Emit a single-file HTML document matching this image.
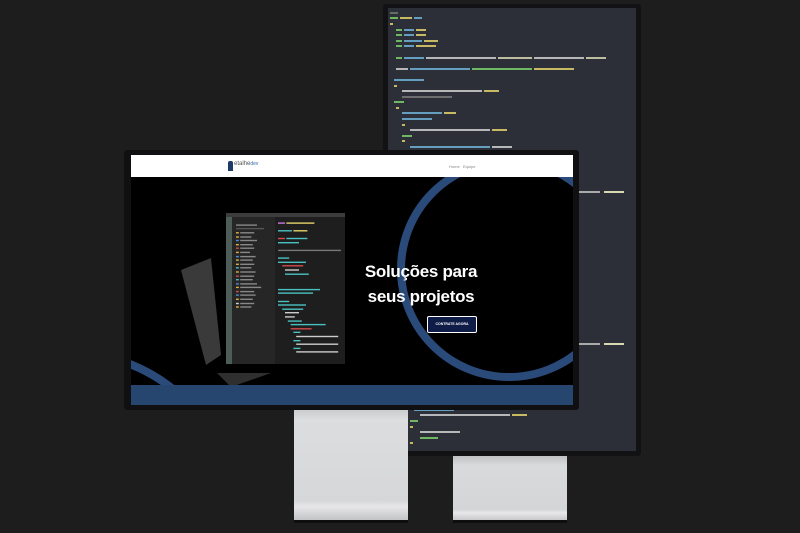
<!DOCTYPE html>
<html><head><meta charset="utf-8"><style>
*{margin:0;padding:0;box-sizing:border-box}
html,body{width:800px;height:533px;overflow:hidden}
body{background:#1d1d1e;position:relative;font-family:"Liberation Sans",sans-serif}
.a{position:absolute}
.code div{height:5.6px;display:flex;align-items:center;overflow:hidden}
.code span{display:block;flex:none;height:2px;margin-right:2px}
</style></head><body>
<!-- back stand -->
<div class="a" style="left:453px;top:455px;width:114px;height:68px;background:linear-gradient(#bdbec0,#d9dadc 15%,#d4d5d7 80%,#e8e8ea 85%,#b9babc);"></div>
<div class="a" style="left:453px;top:520px;width:114px;height:3px;background:#0e0e0e"></div>
<!-- back monitor -->
<div class="a" style="left:383px;top:4px;width:258px;height:452px;background:#121214;border-radius:3px"></div>
<div class="a" style="left:388px;top:8px;width:248px;height:443px;background:#2c2e38;overflow:hidden">
<div class="a code" style="left:2px;top:2px;width:244px;opacity:.85">
<div><span style="width:8px;background:#6d7b6e"></span></div>
<div><span style="width:8px;background:#7bd06a"></span><span style="width:12px;background:#e3d36a"></span><span style="width:8px;background:#6fb3d8"></span></div>
<div><span style="width:3px;background:#e3d36a"></span></div>
<div style="padding-left:6px"><span style="width:6px;background:#7bd06a"></span><span style="width:10px;background:#6fb3d8"></span><span style="width:10px;background:#e3d36a"></span></div>
<div style="padding-left:6px"><span style="width:6px;background:#7bd06a"></span><span style="width:10px;background:#6fb3d8"></span><span style="width:10px;background:#e3d36a"></span></div>
<div style="padding-left:6px"><span style="width:6px;background:#7bd06a"></span><span style="width:18px;background:#6fb3d8"></span><span style="width:14px;background:#e3d36a"></span></div>
<div style="padding-left:6px"><span style="width:6px;background:#7bd06a"></span><span style="width:10px;background:#6fb3d8"></span><span style="width:20px;background:#e3d36a"></span></div>
<div></div>
<div style="padding-left:6px"><span style="width:6px;background:#7bd06a"></span><span style="width:20px;background:#6fb3d8"></span><span style="width:70px;background:#cfcfcf"></span><span style="width:34px;background:#d8d8b0"></span><span style="width:50px;background:#cfcfcf"></span><span style="width:20px;background:#d8d8b0"></span></div>
<div></div>
<div style="padding-left:6px"><span style="width:12px;background:#cfcfcf"></span><span style="width:60px;background:#6fb3d8"></span><span style="width:60px;background:#7bd06a"></span><span style="width:40px;background:#e3d36a"></span></div>
<div></div>
<div style="padding-left:4px"><span style="width:30px;background:#6fb3d8"></span></div>
<div style="padding-left:4px"><span style="width:3px;background:#e3d36a"></span></div>
<div style="padding-left:12px"><span style="width:80px;background:#cfcfcf"></span><span style="width:15px;background:#e3d36a"></span></div>
<div style="padding-left:12px"><span style="width:50px;background:#7a7a7a"></span></div>
<div style="padding-left:4px"><span style="width:10px;background:#7bd06a"></span></div>
<div style="padding-left:6px"><span style="width:3px;background:#e3d36a"></span></div>
<div style="padding-left:12px"><span style="width:40px;background:#6fb3d8"></span><span style="width:12px;background:#e3d36a"></span></div>
<div style="padding-left:12px"><span style="width:30px;background:#6fb3d8"></span></div>
<div style="padding-left:12px"><span style="width:3px;background:#e3d36a"></span></div>
<div style="padding-left:20px"><span style="width:80px;background:#cfcfcf"></span><span style="width:15px;background:#e3d36a"></span></div>
<div style="padding-left:12px"><span style="width:10px;background:#7bd06a"></span></div>
<div style="padding-left:12px"><span style="width:3px;background:#e3d36a"></span></div>
<div style="padding-left:20px"><span style="width:80px;background:#6fb3d8"></span><span style="width:20px;background:#cfcfcf"></span></div>
<div style="padding-left:20px"><span style="width:30px;background:#6fb3d8"></span></div>
<div style="padding-left:20px"><span style="width:3px;background:#e3d36a"></span></div>
<div style="padding-left:28px"><span style="width:100px;background:#cfcfcf"></span><span style="width:15px;background:#e3d36a"></span></div>
<div style="padding-left:20px"><span style="width:10px;background:#7bd06a"></span></div>
<div style="padding-left:20px"><span style="width:3px;background:#e3d36a"></span></div>
<div style="padding-left:28px"><span style="width:40px;background:#cfcfcf"></span></div>
<div style="padding-left:28px"><span style="width:20px;background:#7bd06a"></span></div>
<div style="padding-left:20px"><span style="width:3px;background:#e3d36a"></span></div>
<div></div>
<div style="padding-left:12px"><span style="width:3px;background:#e3d36a"></span></div>
<div></div>
<div style="padding-left:4px"><span style="width:3px;background:#e3d36a"></span></div>
</div>
<div class="a" style="left:190px;top:183px;width:50px;height:2px;font-size:0"><span style="display:inline-block;width:22px;height:2px;background:#aaa"></span><span style="display:inline-block;width:4px"></span><span style="display:inline-block;width:20px;height:2px;background:#d8d8b0"></span></div>
<div class="a" style="left:190px;top:335px;width:50px;height:2px;font-size:0"><span style="display:inline-block;width:22px;height:2px;background:#aaa"></span><span style="display:inline-block;width:4px"></span><span style="display:inline-block;width:20px;height:2px;background:#d8d8b0"></span></div>
<div class="a code" style="left:22px;top:399px;width:220px;opacity:.85">
<div style="padding-left:4px"><span style="width:40px;background:#6fb3d8"></span></div>
<div style="padding-left:10px"><span style="width:90px;background:#cfcfcf"></span><span style="width:15px;background:#e3d36a"></span></div>
<div><span style="width:8px;background:#7bd06a"></span></div>
<div><span style="width:3px;background:#e3d36a"></span></div>
<div style="padding-left:10px"><span style="width:40px;background:#cfcfcf"></span></div>
<div style="padding-left:10px"><span style="width:18px;background:#7bd06a"></span></div>
<div><span style="width:3px;background:#e3d36a"></span></div>
</div>
</div>
<!-- front stand -->
<div class="a" style="left:294px;top:408px;width:114px;height:115px;background:linear-gradient(#c8c9cb,#dcdddf 10%,#d6d7d9 80%,#e6e6e8 86%,#bbbcbe);"></div>
<div class="a" style="left:294px;top:520px;width:114px;height:3px;background:#0e0e0e"></div>
<!-- front monitor -->
<div class="a" style="left:124px;top:150px;width:455px;height:260px;background:#101012;border-radius:3px"></div>
<div class="a" style="left:131px;top:155px;width:442px;height:250px;background:#000;overflow:hidden">
  <svg class="a" style="left:0;top:0" width="442" height="250">
    <circle cx="378" cy="114" r="108" fill="none" stroke="#2a4a7a" stroke-width="8"/>
    <circle cx="-60" cy="360" r="162" fill="none" stroke="#2a4a7a" stroke-width="8"/>
    <polygon points="50,115 80,103 90,200 75,210" fill="#3a3a3a"/>
    <polygon points="86,218 140,218 100,232" fill="#2f2f2f"/>
  </svg>
  <div class="a" style="left:0;top:0;width:442px;height:22px;background:#fff"></div>
  <div class="a" style="left:97px;top:6px;width:5px;height:10px;background:#1d3b66;border-radius:2px 2px 0 0"></div>
  <div class="a" style="left:103px;top:6px;font-size:6px;color:#555">etalhe<span style="color:#2f6ab0;font-size:5px">dev</span></div>
  <div class="a" style="left:318px;top:9px;font-size:4px;color:#888">Home&nbsp;&nbsp;&nbsp;Equipe</div>
  <div class="a" style="left:0;top:230px;width:442px;height:20px;background:#26456f"></div>
  <div class="a" style="left:95px;top:58px;width:119px;height:151px;background:#1e1e1e;overflow:hidden">
    <div class="a" style="left:0;top:0;width:119px;height:4px;background:#3c3c3c"></div>
    <div class="a" style="left:0;top:4px;width:6px;height:147px;background:#4c5c57"></div>
    <div class="a" style="left:6px;top:4px;width:43px;height:147px;background:#262626"></div>
    <div class="a code" style="left:10px;top:10px;width:54px;transform:scale(.7);transform-origin:0 0">
      <div><span style="width:30px;background:#888"></span></div><div><span style="width:40px;background:#555"></span></div>
      <div><span style="width:4px;background:#e3b341"></span><span style="width:20px;background:#888"></span></div>
      <div><span style="width:4px;background:#e3b341"></span><span style="width:16px;background:#888"></span></div>
      <div><span style="width:4px;background:#4a8fd8"></span><span style="width:24px;background:#888"></span></div>
      <div><span style="width:4px;background:#e3b341"></span><span style="width:18px;background:#888"></span></div>
      <div><span style="width:4px;background:#d04a4a"></span><span style="width:20px;background:#888"></span></div>
      <div><span style="width:4px;background:#e3b341"></span><span style="width:14px;background:#888"></span></div>
      <div><span style="width:4px;background:#4a8fd8"></span><span style="width:22px;background:#888"></span></div>
      <div><span style="width:4px;background:#e3b341"></span><span style="width:18px;background:#888"></span></div>
      <div><span style="width:4px;background:#e3b341"></span><span style="width:20px;background:#888"></span></div>
      <div><span style="width:4px;background:#4ac0c0"></span><span style="width:16px;background:#888"></span></div>
      <div><span style="width:4px;background:#e3b341"></span><span style="width:22px;background:#888"></span></div>
      <div><span style="width:4px;background:#d04a4a"></span><span style="width:20px;background:#888"></span></div>
      <div><span style="width:4px;background:#4ac0c0"></span><span style="width:18px;background:#888"></span></div>
      <div><span style="width:4px;background:#4a8fd8"></span><span style="width:24px;background:#888"></span></div>
      <div><span style="width:4px;background:#e3b341"></span><span style="width:30px;background:#888"></span></div>
      <div><span style="width:4px;background:#d04a4a"></span><span style="width:20px;background:#888"></span></div>
      <div><span style="width:4px;background:#4a8fd8"></span><span style="width:22px;background:#888"></span></div>
      <div><span style="width:4px;background:#e3b341"></span><span style="width:18px;background:#888"></span></div>
      <div><span style="width:4px;background:#d0d0d0"></span><span style="width:20px;background:#888"></span></div>
      <div><span style="width:4px;background:#e3b341"></span><span style="width:16px;background:#888"></span></div>
    </div>
    <div class="a code" style="left:52px;top:8px;width:96px;transform:scale(.7);transform-origin:0 0">
      <div><span style="width:10px;background:#c678dd"></span><span style="width:40px;background:#e3d36a"></span></div>
      <div></div>
      <div><span style="width:20px;background:#4ac0c0"></span><span style="width:20px;background:#e3d36a"></span></div>
      <div></div>
      <div><span style="width:10px;background:#d04a4a"></span><span style="width:30px;background:#4ac0c0"></span></div>
      <div><span style="width:30px;background:#4ac0c0"></span></div>
      <div></div>
      <div><span style="width:90px;background:#777"></span></div>
      <div></div>
      <div><span style="width:16px;background:#4ac0c0"></span></div>
      <div><span style="width:40px;background:#4ac0c0"></span></div>
      <div style="padding-left:6px"><span style="width:30px;background:#d04a4a"></span></div>
      <div style="padding-left:10px"><span style="width:20px;background:#ccc"></span></div>
      <div style="padding-left:10px"><span style="width:34px;background:#4ac0c0"></span></div>
      <div></div><div></div><div></div>
      <div><span style="width:60px;background:#4ac0c0"></span></div>
      <div><span style="width:50px;background:#4ac0c0"></span></div>
      <div></div>
      <div><span style="width:16px;background:#4ac0c0"></span></div>
      <div><span style="width:40px;background:#4ac0c0"></span></div>
      <div style="padding-left:6px"><span style="width:30px;background:#4ac0c0"></span></div>
      <div style="padding-left:10px"><span style="width:20px;background:#ccc"></span></div>
      <div style="padding-left:10px"><span style="width:14px;background:#ccc"></span></div>
      <div style="padding-left:14px"><span style="width:20px;background:#4ac0c0"></span></div>
      <div style="padding-left:18px"><span style="width:50px;background:#4ac0c0"></span></div>
      <div style="padding-left:18px"><span style="width:30px;background:#d04a4a"></span></div>
      <div style="padding-left:22px"><span style="width:10px;background:#4ac0c0"></span></div>
      <div style="padding-left:26px"><span style="width:60px;background:#ccc"></span></div>
      <div style="padding-left:22px"><span style="width:10px;background:#4ac0c0"></span></div>
      <div style="padding-left:26px"><span style="width:60px;background:#ccc"></span></div>
      <div style="padding-left:22px"><span style="width:10px;background:#4ac0c0"></span></div>
      <div style="padding-left:26px"><span style="width:60px;background:#ccc"></span></div>
    </div>
  </div>
  <div class="a" style="left:210px;top:104px;width:160px;text-align:center;color:#fff;font-weight:bold;font-size:17px;line-height:25px;letter-spacing:-0.3px">Soluções para<br>seus projetos</div>
  <div class="a" style="left:296px;top:161px;width:50px;height:17px;background:#0f1c48;border:1px solid #fff;border-radius:2px;color:#fff;font-size:3.5px;font-weight:bold;text-align:center;line-height:15px">CONTRATE AGORA</div>
</div>
</body></html>
